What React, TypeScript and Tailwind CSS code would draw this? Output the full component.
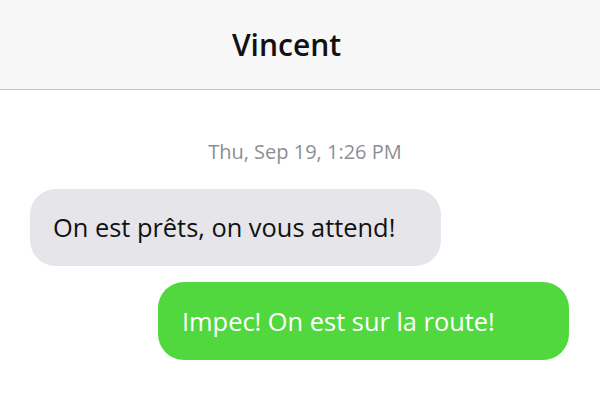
export default function App() {
  return (
    <div className="w-[600px] h-[400px] bg-white overflow-hidden" style={{ fontFamily: '"Open Sans", sans-serif' }}>
      <div className="h-[90px] bg-[#f7f7f7] border-b border-[#c6c6c8] flex items-center justify-center pr-[27px]">
        <span className="text-[30px] font-semibold text-[#111] leading-none">Vincent</span>
      </div>

      <div className="flex flex-col px-[30px] pt-[48px]">
        <div className="text-center text-[20px] text-[#8e8e93] pl-[10px] leading-[28px]">Thu, Sep 19, 1:26 PM</div>

        <div className="mt-[23px] flex">
          <div className="w-[411px] h-[77px] rounded-[26px] bg-[#e5e5ea] flex items-center pl-[23px] text-[25.4px] text-[#111]">
            On est prêts, on vous attend!
          </div>
        </div>

        <div className="mt-[16px] flex justify-end pr-[1px]">
          <div className="w-[411px] h-[78px] rounded-[26px] bg-[#52d83f] flex items-center pl-[24px] text-[25.4px] text-white">
            Impec! On est sur la route!
          </div>
        </div>
      </div>
    </div>
  );
}
